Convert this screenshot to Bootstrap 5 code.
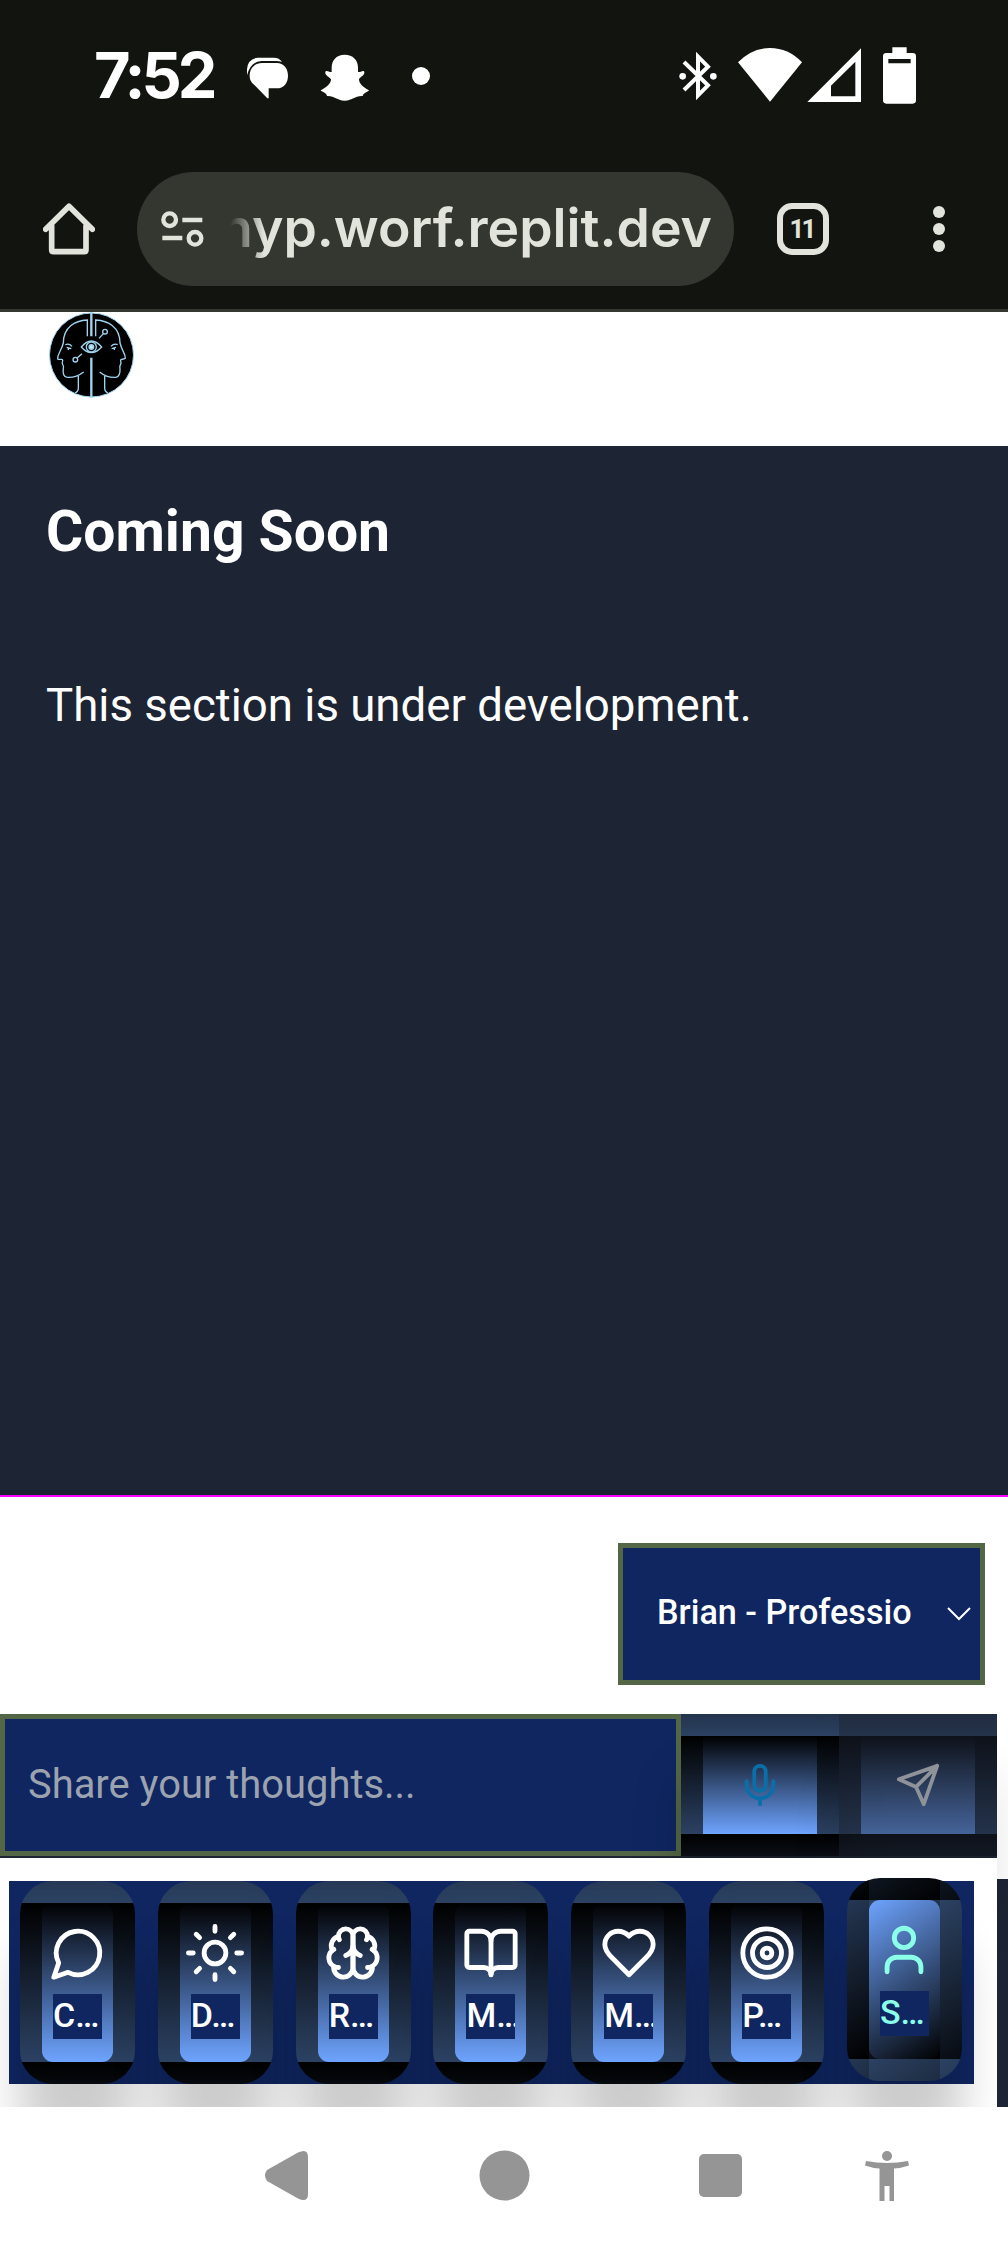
<!DOCTYPE html>
<html lang="en">
<head>
<meta charset="utf-8">
<meta name="viewport" content="width=device-width, initial-scale=1">
<title>Coming Soon</title>
<link href="https://cdn.jsdelivr.net/npm/bootstrap@5.3.0/dist/css/bootstrap.min.css" rel="stylesheet">
<style>
body{width:1008px;height:2244px;overflow:hidden;background:#fff;font-family:Roboto,sans-serif}
svg{display:block;flex:none}
.statusbar{height:159px;background:#12140f;padding:46px 91px 0 94px}
.clock{font:700 63px/59px Inter,sans-serif;color:#fff;width:152px;letter-spacing:-4px;white-space:nowrap}
.toolbar-top{height:153px;background:#12140f;border-bottom:3px solid #343630;padding:13px 0 0 43px}
.omni{width:597px;height:114px;border-radius:57px;background:#343630;margin-left:42px;padding-left:24px}
.url{width:482px;margin-left:26px;height:90px;font:600 53.5px/88px Inter,sans-serif;color:#e2e4dc;overflow:hidden;white-space:nowrap;-webkit-mask-image:linear-gradient(90deg,transparent 0,#000 34px);mask-image:linear-gradient(90deg,transparent 0,#000 34px)}
.tabs-btn{width:52px;height:52px;border:6px solid #e2e4dc;border-radius:15px;color:#e2e4dc;font:700 26px/40px Roboto,sans-serif;letter-spacing:-3px;padding-right:3px;margin-left:43px}
.app-head{height:134px;padding-left:49px}
.stage{height:1051px;background:#1d2433;border-bottom:2px solid #f0f;color:#fff;padding:46px 46px 0}
.stage h1{font-size:57px;font-weight:700;line-height:80px;margin:0}
.stage p{font-size:45.6px;line-height:70px;margin:99px 0 0;white-space:nowrap}
.voice-row{height:217px;padding:46px 23px 0 0}
.voice{width:367px;height:142px;background:#0f2661;border:5px solid #536746;color:#fff;font-size:34.200px;font-weight:500;padding:0 9px 2px 34px}
.voice-name{width:256px;overflow:hidden;white-space:nowrap}
.compose{width:997px;height:144px;background:#1d2433;padding-bottom:2px}
.thought{width:681px;height:142px;border:5px solid #536746;border-radius:0;background:#0f2661;padding:0 23px 2px;font-size:39.900px;color:#fff;line-height:1.2}
.thought::placeholder{color:#9ca3af;opacity:1}
.pill-btn{border:22px solid transparent;background:linear-gradient(180deg,#000,#6ea4ff) padding-box,linear-gradient(180deg,#000,#2c4263);box-shadow:0 64px 46px rgba(0,0,0,.2);padding:0}
.tool-btn{width:158px;height:142px;position:relative}
.tool-btn.off{opacity:.5}
.lower-main{width:997px;height:249px;background:#fff;overflow:hidden;padding:23px 0 0 9px;position:relative}
.edge{width:11px;height:228px;background:#1d2433}
.tabbar{width:965px;height:203px;background:#0f2661;padding:0 12px 0 11px}
.tab-item{width:115px;height:203px;border-radius:33px;color:#fff;padding-top:21px}
.tab-item.on{color:#8cffe8;background:linear-gradient(145deg,#6ea4ff,#000) padding-box,linear-gradient(145deg,#2c4263,#000);transform:translateY(-3px)}
.tab-label{width:49px;height:45px;margin-top:12px;background:#0f2661;font-size:34px;line-height:43px;font-weight:500;overflow:hidden;white-space:nowrap;text-align:left}
.ln{fill:none;stroke:currentColor;stroke-width:2;stroke-linecap:round;stroke-linejoin:round}
.sysnav{height:137px;background:#fff;position:relative;padding:43px 0 0 264px}
</style>
</head>
<body>
<header>
<div class="statusbar d-flex align-items-start">
  <div class="clock">7:52</div>
  <svg width="43" height="60" viewBox="738 138 129 180" fill="#fff"><path d="M741 226V208Q743 176 774 173H822Q838 173 846 186Q838 183 828 183H784Q752 184 741 226Z"/><path d="M786 189H830C852 189 864 206 864 227S852 265 830 265H806V295H802L764 256C752 245 749 238 749 227C749 205 764 189 786 189Z"/></svg>
  <svg style="margin-left:31px" width="51" height="60" viewBox="960 138 153 180" fill="#fff"><path d="M1034 164C1059 164 1074 180 1074 203V216C1082 218 1087 211 1092 214C1098 224 1080 231 1077 238C1077 252 1091 263 1107 271C1103 278 1091 277 1088 288C1063 287 1060 301 1034 302C1009 301 1005 287 981 288C979 277 967 278 962 271C978 263 993 252 993 238C989 231 971 225 977 214C983 211 989 218 995 216V203C995 180 1010 164 1034 164Z"/></svg>
  <svg style="margin-left:40px" width="20" height="60" viewBox="1233 138 60 180" fill="#fff"><circle cx="1263" cy="228" r="27"/></svg>
  <div class="d-flex ms-auto">
  <svg width="40" height="60" viewBox="522 138 120 180"><g fill="#fff"><circle cx="536" cy="229" r="10"/><circle cx="628" cy="229" r="10"/></g><path d="M540 186L612 256L582 286V170L612 200L540 270" fill="none" stroke="#fff" stroke-width="12"/></svg>
  <svg style="margin-left:19px" width="66" height="60" viewBox="699 138 198 180" fill="#fff"><path d="M702 187Q743 144 798 144T894 187L798 305Z"/></svg>
  <svg style="margin-left:4px" width="54" height="60" viewBox="909 138 162 180"><path fill="#fff" fill-rule="evenodd" d="M910 306L1071 145V306ZM981 257V289H1054V185Z"/></svg>
  <svg style="margin-left:21px" width="35" height="60" viewBox="1134 138 105 180"><path fill="#fff" fill-rule="evenodd" d="M1165 142H1208V159H1226Q1236 159 1236 169V301Q1236 311 1226 311H1147Q1137 311 1137 301V169Q1137 159 1147 159H1165ZM1153 177V190H1220V177Z"/></svg>
  </div>
</div>
<div class="toolbar-top d-flex align-items-start">
  <div class="d-flex align-items-center">
  <svg width="52" height="52" viewBox="129 159 156 156"><path d="M155 228V299Q155 305 161 305H252Q258 305 258 299V228M137 238L207 169L277 238" fill="none" stroke="#e2e4dc" stroke-width="17" stroke-linecap="round" stroke-linejoin="round"/></svg>
  <div class="omni d-flex align-items-center">
    <svg width="43" height="36" viewBox="482 183 129 108" fill="none" stroke="#e2e4dc" stroke-width="13"><circle cx="508" cy="209" r="19"/><circle cx="584" cy="265" r="19"/><path d="M546 210H606M486 264H546"/></svg>
    <div class="url d-flex justify-content-end"><span>hyp.worf.replit.dev</span></div>
  </div>
  <div class="tabs-btn text-center">11</div>
  <svg style="margin-left:104px" width="12" height="48" viewBox="0 0 12 48" fill="#e2e4dc"><circle cx="6" cy="7" r="6"/><circle cx="6" cy="24" r="6"/><circle cx="6" cy="41" r="6"/></svg>
  </div>
</div>
</header>
<div class="app-head">
  <svg width="85" height="86" viewBox="147 485 255 258" fill="none" stroke="#9fd4f0" stroke-width="4">
    <circle cx="274.500" cy="614" r="126" fill="#000" stroke-width="3"/>
    <path d="M274 486V558M274 622V742" stroke-width="7"/><path d="M262 558V509C225 511 190 530 190 578C184 602 172 611 173 626C180 630 189 623 188 632C182 642 194 645 190 653C188 670 191 680 202 681C222 682 238 675 251 665M235 677V714Q235 724 225 728"/>
    <path d="M287 558V509C324 511 360 530 360 578C366 602 377 611 376 624C369 630 361 623 362 632C367 642 356 645 360 653C361 670 358 680 347 681C327 682 311 675 299 665M314 677V714Q314 724 324 728"/>
    <path d="M244 590Q274 554 305 590Q274 624 244 590Z"/><circle cx="274" cy="590" r="15"/><circle cx="274" cy="590" r="7" fill="#b9e4fa"/>
    <circle cx="315" cy="544" r="7"/><path d="M310 550L297 564"/><circle cx="226" cy="628" r="7"/><path d="M232 622L246 610"/>
    <path d="M196 583Q207 578 216 588M200 591L214 595M205 593V599M353 583Q342 578 333 588M348 591L335 595M343 593V599"/>
  </svg>
</div>
<main>
<section class="stage">
  <h1>Coming Soon</h1>
  <p>This section is under development.</p>
</section>
<div class="voice-row d-flex justify-content-end align-items-start">
  <div class="voice d-flex align-items-center justify-content-between" role="button">
    <span class="voice-name">Brian - Professio</span>
    <svg width="24" height="16" viewBox="0 0 24 16" fill="none" stroke="#fff" stroke-width="2"><path d="M1 3L12 14L23 3"/></svg>
  </div>
</div>
<form class="compose d-flex">
  <input class="thought form-control" type="text" placeholder="Share your thoughts...">
  <button type="button" class="pill-btn tool-btn d-flex align-items-center justify-content-center" aria-label="Record" style="color:#0a6fa8">
    <svg class="ln" width="46" height="46" viewBox="0 0 24 24"><path d="M12 2a3 3 0 0 0-3 3v7a3 3 0 0 0 6 0V5a3 3 0 0 0-3-3Z"/><path d="M19 10v2a7 7 0 0 1-14 0v-2M12 19v3"/></svg>
  </button>
  <button type="button" class="pill-btn tool-btn off d-flex align-items-center justify-content-center text-white" aria-label="Send">
    <svg class="ln" width="46" height="46" viewBox="0 0 24 24"><path d="M22 2 11 13M22 2l-7 20-4-9-9-4Z"/></svg>
  </button>
</form>
<div class="d-flex align-items-end" style="height:249px">
<div class="lower-main">
  <nav class="tabbar d-flex justify-content-between">
    <button class="pill-btn tab-item d-flex flex-column align-items-center"><svg class="ln" width="58" height="58" viewBox="0 0 24 24"><path d="M7.900 20A9 9 0 1 0 4 16.100L2 22Z"/></svg><span class="tab-label">C…</span></button>
    <button class="pill-btn tab-item d-flex flex-column align-items-center"><svg class="ln" width="58" height="58" viewBox="0 0 24 24"><circle cx="12" cy="12" r="4.500"/><path d="M12 1v2M12 21v2M4.220 4.220l1.420 1.420M18.360 18.360l1.420 1.420M1 12h2M21 12h2M4.220 19.780l1.420-1.420M18.360 5.640l1.420-1.420"/></svg><span class="tab-label">D…</span></button>
    <button class="pill-btn tab-item d-flex flex-column align-items-center"><svg class="ln" width="58" height="58" viewBox="0 0 24 24"><path d="M12 5a3 3 0 1 0-5.997.125 4 4 0 0 0-2.526 5.770 4 4 0 0 0 .556 6.588A4 4 0 1 0 12 18Z"/><path d="M12 5a3 3 0 1 1 5.997.125 4 4 0 0 1 2.526 5.770 4 4 0 0 1-.556 6.588A4 4 0 1 1 12 18Z"/><path d="M15 13a4.500 4.500 0 0 1-3-4 4.500 4.500 0 0 1-3 4M17.599 6.500a3 3 0 0 0 .399-1.375M6.003 5.125A3 3 0 0 0 6.401 6.500M3.477 10.896a4 4 0 0 1 .585-.396M19.938 10.500a4 4 0 0 1 .585.396M6 18a4 4 0 0 1-1.967-.516M19.967 17.484A4 4 0 0 1 18 18"/></svg><span class="tab-label">R…</span></button>
    <button class="pill-btn tab-item d-flex flex-column align-items-center"><svg class="ln" width="58" height="58" viewBox="0 0 24 24"><path d="M12 7v14"/><path d="M3 18a1 1 0 0 1-1-1V4a1 1 0 0 1 1-1h5a4 4 0 0 1 4 4 4 4 0 0 1 4-4h5a1 1 0 0 1 1 1v13a1 1 0 0 1-1 1h-6a3 3 0 0 0-3 3 3 3 0 0 0-3-3z"/></svg><span class="tab-label">M…</span></button>
    <button class="pill-btn tab-item d-flex flex-column align-items-center"><svg class="ln" width="58" height="58" viewBox="0 0 24 24"><path d="M19 14c1.490-1.460 3-3.210 3-5.500A5.500 5.500 0 0 0 16.500 3c-1.760 0-3 .5-4.500 2-1.500-1.500-2.740-2-4.500-2A5.500 5.500 0 0 0 2 8.500c0 2.300 1.500 4.050 3 5.500l7 7Z"/></svg><span class="tab-label">M…</span></button>
    <button class="pill-btn tab-item d-flex flex-column align-items-center"><svg class="ln" width="58" height="58" viewBox="0 0 24 24"><circle cx="12" cy="12" r="10"/><circle cx="12" cy="12" r="6"/><circle cx="12" cy="12" r="2"/></svg><span class="tab-label">P…</span></button>
    <button class="pill-btn tab-item on d-flex flex-column align-items-center"><svg class="ln" width="58" height="58" viewBox="0 0 24 24"><path d="M19 21v-2a4 4 0 0 0-4-4H9a4 4 0 0 0-4 4v2"/><circle cx="12" cy="7" r="4"/></svg><span class="tab-label">S…</span></button>
  </nav>
</div>
<div class="edge"></div>
</div>
</main>
<footer class="sysnav">
  <div class="d-flex align-items-center" style="height:51px">
  <svg width="45" height="51" viewBox="0 0 45 51" fill="#959595"><path d="M3 20L34 2.500Q44-2 44 7V44Q44 53 34 48.500L3 31Q-1 25.500 3 20Z"/></svg>
  <svg style="margin-left:170px" width="51" height="51" viewBox="0 0 51 51" fill="#959595"><circle cx="25.500" cy="25.500" r="25"/></svg>
  <svg style="margin-left:169px" width="43" height="43" viewBox="0 0 43 43" fill="#959595"><rect width="43" height="43" rx="5"/></svg>
  <svg style="margin-left:122px" width="46" height="51" viewBox="0 0 46 51" fill="#959595"><circle cx="23" cy="6" r="5"/><path d="M2 11Q23 15 44 11L45 15.500Q38 18 30 18.500V51H25.500V36H20.500V51H15.500V18.500Q8 18 1 15.500Z"/></svg>
  </div>
</footer>
<script src="https://cdn.jsdelivr.net/npm/bootstrap@5.3.0/dist/js/bootstrap.bundle.min.js"></script>
</body>
</html>
